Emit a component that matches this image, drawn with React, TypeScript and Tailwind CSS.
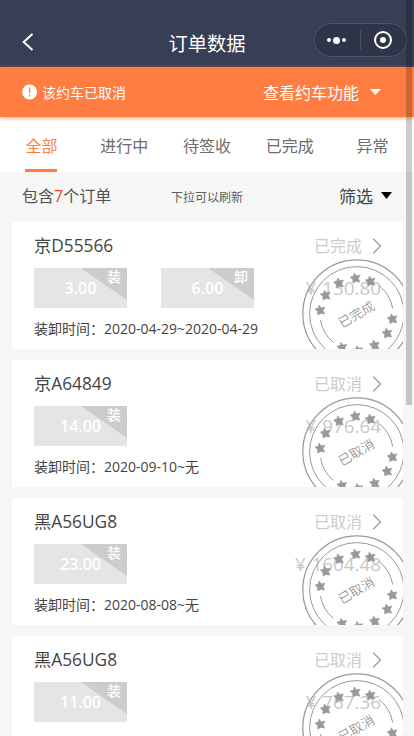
import React from 'react';

type Chip = { value: string; tag: string };
type Order = { plate: string; status: string; price: string; chips: Chip[]; time: string };

const TABS = ['全部', '进行中', '待签收', '已完成', '异常'];

const ORDERS: Order[] = [
  {
    plate: '京D55566',
    status: '已完成',
    price: '130.80',
    chips: [
      { value: '3.00', tag: '装' },
      { value: '6.00', tag: '卸' },
    ],
    time: '2020-04-29~2020-04-29',
  },
  { plate: '京A64849', status: '已取消', price: '976.64', chips: [{ value: '14.00', tag: '装' }], time: '2020-09-10~无' },
  { plate: '黑A56UG8', status: '已取消', price: '1604.48', chips: [{ value: '23.00', tag: '装' }], time: '2020-08-08~无' },
  { plate: '黑A56UG8', status: '已取消', price: '767.36', chips: [{ value: '11.00', tag: '装' }], time: '2020-08-08~无' },
];

const STARS: [number, number][] = [
  [18.2, 51],
  [23.5, 36],
  [36.8, 23.8],
  [53.4, 19],
  [68.4, 22],
  [90.3, 59.7],
  [85.2, 74],
  [72.6, 86],
  [56, 91.5],
  [40, 88.2],
];

const STAR = 'M-1.2 -5 L1 -2.2 L4.7 -2.8 L2.9 0.6 L4.5 4.1 L0.5 3.4 L-2.5 5 L-2.6 1.6 L-5.2 -0.9 L-1.8 -1.9 Z';

function Stamp({ label }: { label: string }) {
  return (
    <div className="absolute left-[290px] top-[37px] h-[110px] w-[110px]">
      <svg className="absolute inset-0" width="110" height="110" viewBox="0 0 110 110" fill="none" stroke="#999">
        <circle cx="54.8" cy="54.8" r="54" strokeWidth="1.3" />
        <circle cx="54.8" cy="54.8" r="47.2" strokeWidth="1" />
        <path d="M18.5 61 A37 37 0 0 0 31.5 83.5" strokeWidth="1" />
        <path d="M77 26.5 A37 37 0 0 1 90.7 49.5" strokeWidth="1" />
        {STARS.map(([x, y]) => (
          <path key={x} d={STAR} transform={`translate(${x} ${y})`} fill="#999" stroke="#999" strokeWidth="0.6" />
        ))}
      </svg>
      <div className="flex h-full items-center justify-center">
        <span className="-rotate-[30deg] text-[13px] font-light leading-none text-[#777]">{label}</span>
      </div>
    </div>
  );
}

function LoadChip({ value, tag }: Chip) {
  return (
    <div className="relative flex h-10 w-[93px] items-center justify-center bg-[#e5e5e5]">
      <svg className="absolute right-0 top-0" width="46" height="32" viewBox="0 0 46 32">
        <path d="M0 0H46V32Z" fill="#ccc" />
      </svg>
      <span className="relative text-base font-semibold leading-none text-white">{value}</span>
      <span className="absolute right-[6px] top-[2px] text-[14px] font-medium leading-[14px] text-white">{tag}</span>
    </div>
  );
}

function OrderCard({ order }: { order: Order }) {
  return (
    <section className="relative h-[127px] shrink-0 overflow-hidden bg-white pl-[22px] pr-[21px] pt-3">
      <div className="flex h-6 items-center justify-between">
        <h2 className="text-[17.3px] leading-6 text-[#444]">{order.plate}</h2>
        <div className="flex items-center gap-[10px]">
          <span className="text-base leading-6 text-[#ccc]">{order.status}</span>
          <svg width="10" height="16" viewBox="0 0 10 16" fill="none" stroke="#999" strokeWidth="1.2">
            <path d="M1.2 0.8L8.6 8L1.2 15.2" />
          </svg>
        </div>
      </div>
      <div className="mt-[10px] flex h-10 justify-between">
        <div className="flex gap-[34px]">
          {order.chips.map((chip) => (
            <LoadChip key={chip.tag} {...chip} />
          ))}
        </div>
        <p className="mr-[1px] flex items-center gap-[6px] text-[18.8px] font-medium leading-none text-[#c8c8c8]">
          <span>¥</span>
          <span>{order.price}</span>
        </p>
      </div>
      <p className="mt-[11px] whitespace-nowrap text-sm leading-5 text-[#444]">装卸时间：{order.time}</p>
      <Stamp label={order.status} />
    </section>
  );
}

export default function App() {
  return (
    <div className="relative flex h-[736px] w-[414px] flex-col overflow-hidden bg-[#f6f6f6] font-['Open_Sans','Noto_Sans_CJK_SC',sans-serif]">
      <header className="grid h-[67px] shrink-0 grid-cols-3 bg-[#383f54] pt-[19px]">
        <div className="flex h-[45px] items-center pl-[22px]">
          <svg width="12" height="18" viewBox="0 0 12 18" fill="none" stroke="#fff" strokeWidth="2">
            <path d="M10.5 1L1.7 9L10.5 17" />
          </svg>
        </div>
        <h1 className="flex h-[50px] items-center justify-center text-[19.3px] text-white">订单数据</h1>
        <div className="flex justify-end pr-[7px] pt-1">
          <div className="flex h-[34px] w-[93px] items-center rounded-full border border-[#4d5366] bg-[#2f3548]">
            <div className="flex flex-1 items-center justify-center gap-[2px] pr-[2px]">
              <i className="size-1 rounded-full bg-white" />
              <i className="size-[7px] rounded-full bg-white" />
              <i className="size-1 rounded-full bg-white" />
            </div>
            <div className="h-5 w-px bg-[#4a5063]" />
            <div className="flex flex-1 items-center justify-center pr-[2px]">
              <div className="flex size-[18px] items-center justify-center rounded-full border-2 border-white">
                <i className="size-[6px] rounded-full bg-white" />
              </div>
            </div>
          </div>
        </div>
      </header>

      <div className="relative flex h-[50px] shrink-0 items-center justify-between bg-[#ff7d41] pl-[22px] pr-[33px] text-white shadow-[0_1px_4px_rgba(255,125,65,0.7)]">
        <div className="flex items-center gap-1">
          <svg width="16" height="16" viewBox="0 0 16 16">
            <circle cx="7.6" cy="8" r="7.5" fill="#fff" />
            <path d="M7.6 3.5V9.3M7.6 10.8V12.3" stroke="#ff7d41" strokeWidth="1.3" />
          </svg>
          <span className="pt-[2px] text-sm">该约车已取消</span>
        </div>
        <div className="flex items-center gap-[11px]">
          <span className="pt-[2px] text-base">查看约车功能</span>
          <svg width="11" height="6" viewBox="0 0 11 6">
            <path d="M0 0H11L5.5 6Z" fill="#fff" />
          </svg>
        </div>
      </div>

      <nav className="flex h-[55px] shrink-0 bg-white">
        {TABS.map((tab, i) => (
          <div key={tab} className="flex flex-1 justify-center">
            <span
              className={
                i === 0
                  ? 'h-[55px] border-b-[3px] border-[#ff7d41] text-base leading-[58px] text-[#ff7d41]'
                  : 'text-base leading-[58px] text-[#6c6c6c]'
              }
            >
              {tab}
            </span>
          </div>
        ))}
      </nav>

      <div className="grid h-[50px] shrink-0 grid-cols-3 items-center px-[22px]">
        <p className="-mt-[2px] text-base leading-none text-[#505050]">
          包含<span className="text-[#fb3b2f]">7</span>个订单
        </p>
        <p className="pt-[2px] text-center text-xs leading-none text-[#606060]">下拉可以刷新</p>
        <div className="flex items-center justify-end gap-2">
          <span className="-mt-[1px] text-[17px] leading-none text-[#444]">筛选</span>
          <svg className="-mt-[4px]" width="11" height="7" viewBox="0 0 11 7">
            <path d="M0 0H11L5.5 7Z" fill="#000" />
          </svg>
        </div>
      </div>

      <main className="flex flex-col gap-[11px] pl-3 pr-[11px]">
        {ORDERS.map((order, i) => (
          <OrderCard key={i} order={order} />
        ))}
      </main>

      <div className="absolute right-[2px] top-0 h-[405px] w-[6px] bg-black/20" />
    </div>
  );
}
